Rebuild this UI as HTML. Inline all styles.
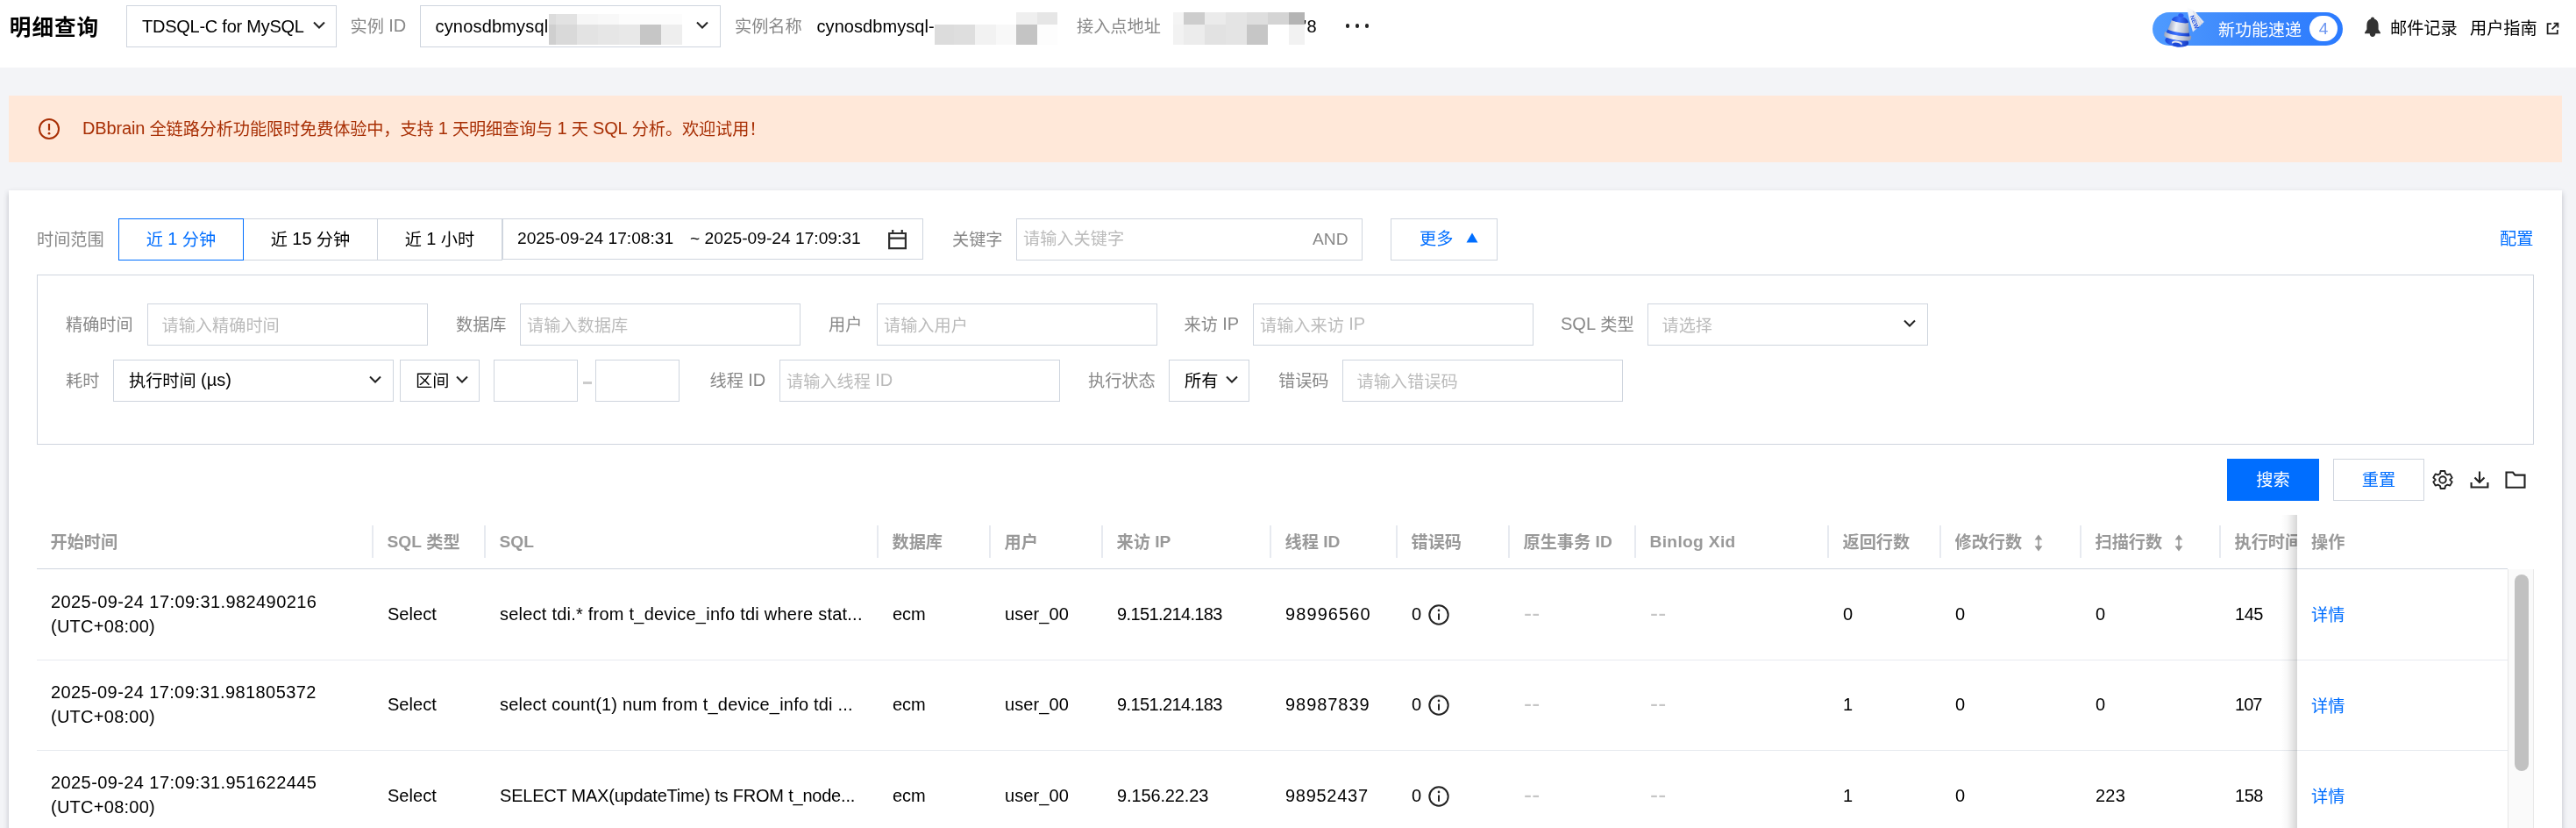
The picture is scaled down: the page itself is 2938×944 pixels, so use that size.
<!DOCTYPE html>
<html lang="zh-CN">
<head>
<meta charset="utf-8">
<title>明细查询</title>
<style>
*{box-sizing:border-box;margin:0;padding:0}
html,body{width:2938px;height:944px;overflow:hidden}
html{-webkit-font-smoothing:antialiased}
#hd,#alert,#card{will-change:transform}
body{background:#f3f4f7;font-family:"Liberation Sans","Noto Sans CJK SC",sans-serif;font-size:19.2px;color:#000;position:relative}
.abs{position:absolute;white-space:nowrap}
.lbl{position:absolute;white-space:nowrap;color:#888;height:48px;line-height:49px}
.box{position:absolute;height:48px;border:1px solid #cfd5de;background:#fff;line-height:47px;white-space:nowrap}
.ph{color:#bbb;margin-top:.5px}
.chev{position:absolute;top:15.5px;width:16px;height:12px}
.blue{color:#006eff}
/* header */
#hd{position:absolute;left:0;top:0;width:2938px;height:77px;background:#fff}
#hd .lbl,#hd .txt{top:6px}
.l{font-size:20px}
.e{font-size:20px;position:relative;top:-1.2px}
.eb{position:relative;top:-1.2px}
.txt{position:absolute;white-space:nowrap;height:48px;line-height:48px}
.mos{position:absolute;z-index:1}
.mos i{position:absolute;display:block}
/* alert */
#alert{position:absolute;left:10px;top:109px;width:2912px;height:76px;background:#ffe8d9;color:#a82f05;line-height:76px}
/* card */
#card{position:absolute;left:10px;top:217px;width:2912px;height:740px;background:#fff;box-shadow:0 3px 6px rgba(54,58,80,.3)}
#filter{position:absolute;left:32px;top:96px;width:2848px;height:194px;border:1px solid #cfd5de}
.seg{position:absolute;top:32px;height:48px;border:1px solid #cfd5de;line-height:47.5px;text-align:center;background:#fff}
/* table */
#th{position:absolute;left:32px;top:370px;width:2818px;height:62px;border-bottom:1px solid #cfd5de;overflow:hidden}
#th span{position:absolute;top:1px;margin-left:-.5px;height:61px;line-height:62px;color:#999;font-weight:bold;white-space:nowrap}
#th i{position:absolute;top:12px;width:2px;margin-left:-1px;height:37px;background:#e7eaf0}
.row{position:absolute;left:32px;width:2818px;height:104px;border-bottom:1px solid #e7eaef;overflow:hidden}
.row span{position:absolute;white-space:nowrap;line-height:28.8px;font-size:20px}
.row .c{top:37px}
#row2 span,#row2 svg{margin-top:-1px}
#row3 span,#row3 svg{margin-top:-.5px}
#row2 .g{margin-top:-1.7px}
#row3 .g{margin-top:-1.2px}
.row .g{color:#c6c6c6;font-size:27px;letter-spacing:.3px;margin-top:-.7px}
.info{position:absolute;left:1586.9px;top:40.3px;width:24px;height:24px}
#fix{position:absolute;left:2610px;top:370px;width:240px;height:380px;background:#fff}
#fix:before{content:"";position:absolute;left:-18px;top:0;width:18px;height:380px;background:linear-gradient(90deg,rgba(0,0,0,0) 0%,rgba(0,0,0,.03) 40%,rgba(0,0,0,.16) 100%)}
#fix .h{position:absolute;left:16px;top:1px;height:61px;line-height:62px;color:#999;font-weight:bold}
#fix .hl{position:absolute;left:0;top:61px;width:240px;height:1px;background:#cfd5de}
#fix a{position:absolute;left:16px;color:#006eff;line-height:28.8px}
#fix .rl{position:absolute;left:0;width:240px;height:1px;background:#e7eaef}
#sb{position:absolute;left:2850px;top:432px;width:30px;height:320px;background:#fafafa;border-left:1px solid #e8e8e8;border-right:1px solid #e8e8e8}
/*FIT*/
#r1_1{letter-spacing:0.41px}
#r2_1{letter-spacing:0.39px}
#r3_1{letter-spacing:0.41px}
#r1_1b{letter-spacing:0.26px}
#r2_1b{letter-spacing:0.26px}
#r3_1b{letter-spacing:0.26px}
#r1_2{letter-spacing:0.03px}
#r2_2{letter-spacing:0.03px}
#r3_2{letter-spacing:0.03px}
#r1_3{letter-spacing:0.23px}
#r2_3{letter-spacing:0.20px}
#r3_3{letter-spacing:-0.21px}
#r1_4{letter-spacing:-0.10px}
#r2_4{letter-spacing:-0.10px}
#r3_4{letter-spacing:-0.10px}
#r1_5{letter-spacing:0.10px}
#r2_5{letter-spacing:0.10px}
#r3_5{letter-spacing:0.10px}
#r1_6{letter-spacing:-0.62px}
#r2_6{letter-spacing:-0.62px}
#r3_6{letter-spacing:-0.13px}
#r1_7{letter-spacing:1.09px}
#r2_7{letter-spacing:0.95px}
#r3_7{letter-spacing:0.72px}
#r3_13{letter-spacing:0.21px}
#r1_14{letter-spacing:-0.44px}
#r2_14{letter-spacing:-0.94px}
#r3_14{letter-spacing:-0.44px}
#h1{letter-spacing:-0.25px}
#h2{letter-spacing:0.18px}
#h3{letter-spacing:0.07px}
#al{letter-spacing:-0.13px}
/*ENDFIT*/
#sb b{position:absolute;left:7px;top:6px;width:16px;height:224px;border-radius:8px;background:#c1c1c1}
</style>
</head>
<body>
<div id="hd">
  <div class="abs" style="left:10.8px;top:8.2px;height:48px;line-height:48px;font-size:24.6px;letter-spacing:1px;font-weight:bold;">明细查询</div>
  <div class="box" style="left:144px;top:6px;width:240px;"><span id="h1" class="abs l" style="left:17px">TDSQL-C for MySQL</span>
    <svg class="chev" style="left:210.5px" viewBox="0 0 16 12"><path d="M2 2.5 L8 8.5 L14 2.5" fill="none" stroke="#222" stroke-width="2"/></svg></div>
  <div class="lbl" style="left:399.5px">实例 <span class="e">ID</span></div>
  <div class="box" style="left:479px;top:6px;width:343px;"><span id="h2" class="abs l" style="left:16.5px">cynosdbmysql</span>
    <svg class="chev" style="left:313px" viewBox="0 0 16 12"><path d="M2 2.5 L8 8.5 L14 2.5" fill="none" stroke="#222" stroke-width="2"/></svg></div>
  <div class="mos" style="left:626px;top:16px;width:152px;height:35px;background:#fff">
    <i style="left:0px;top:0px;width:8px;height:12px;background:#dcdcdc"></i>
    <i style="left:8px;top:0px;width:24px;height:12px;background:#e2e2e2"></i>
    <i style="left:32px;top:0px;width:24px;height:12px;background:#f6f6f6"></i>
    <i style="left:56px;top:0px;width:24px;height:12px;background:#f8f8f8"></i>
    <i style="left:80px;top:0px;width:72px;height:12px;background:#fcfcfc"></i>
    <i style="left:0px;top:12px;width:8px;height:23px;background:#cfcfcf"></i>
    <i style="left:8px;top:12px;width:24px;height:23px;background:#d9d9d9"></i>
    <i style="left:32px;top:12px;width:24px;height:23px;background:#e3e3e3"></i>
    <i style="left:56px;top:12px;width:24px;height:23px;background:#e6e6e6"></i>
    <i style="left:80px;top:12px;width:24px;height:23px;background:#e8e8e8"></i>
    <i style="left:104px;top:12px;width:24px;height:23px;background:#c6c6c6"></i>
    <i style="left:128px;top:12px;width:24px;height:23px;background:#eeeeee"></i>
  </div>
  <div class="lbl" style="left:838px">实例名称</div>
  <div id="h3" class="txt l" style="left:931.5px">cynosdbmysql-</div>
  <div class="mos" style="left:1066px;top:14px;width:140px;height:37px;">
    <i style="left:0px;top:14px;width:22px;height:23px;background:#dcdcdc"></i>
    <i style="left:22px;top:14px;width:24px;height:23px;background:#dedede"></i>
    <i style="left:46px;top:14px;width:24px;height:23px;background:#f2f2f2"></i>
    <i style="left:70px;top:14px;width:23px;height:23px;background:#f8f8f8"></i>
    <i style="left:93px;top:14px;width:24px;height:23px;background:#c4c4c4"></i>
    <i style="left:117px;top:14px;width:23px;height:23px;background:#fdfdfd"></i>
    <i style="left:93px;top:0px;width:24px;height:14px;background:#efefef"></i>
    <i style="left:117px;top:0px;width:23px;height:14px;background:#e6e6e6"></i>
  </div>
  <div class="lbl" style="left:1228px">接入点地址</div>
  <div class="mos" style="left:1338px;top:14px;width:150px;height:37px;">
    <i style="left:0px;top:0px;width:12px;height:14px;background:#f4f4f4"></i>
    <i style="left:12px;top:0px;width:24px;height:14px;background:#cdcdcd"></i>
    <i style="left:36px;top:0px;width:24px;height:14px;background:#ebebeb"></i>
    <i style="left:60px;top:0px;width:24px;height:14px;background:#e4e4e4"></i>
    <i style="left:84px;top:0px;width:24px;height:14px;background:#dedede"></i>
    <i style="left:108px;top:0px;width:24px;height:14px;background:#d4d4d4"></i>
    <i style="left:132px;top:0px;width:18px;height:14px;background:#b4b4b4"></i>
    <i style="left:0px;top:14px;width:12px;height:23px;background:#f2f2f2"></i>
    <i style="left:12px;top:14px;width:24px;height:23px;background:#ececec"></i>
    <i style="left:36px;top:14px;width:24px;height:23px;background:#e2e2e2"></i>
    <i style="left:60px;top:14px;width:24px;height:23px;background:#e4e4e4"></i>
    <i style="left:84px;top:14px;width:24px;height:23px;background:#c6c6c6"></i>
    <i style="left:108px;top:14px;width:24px;height:23px;background:#ffffff"></i>
    <i style="left:132px;top:14px;width:18px;height:23px;background:#f2f2f2"></i>
  </div>
  <div class="txt l" style="left:1486px">’8</div>
  <div class="abs" style="left:1534px;top:27px;width:30px;height:6px">
    <i style="position:absolute;left:0.9px;top:0.4px;width:4.2px;height:4.2px;border-radius:3px;background:#222"></i>
    <i style="position:absolute;left:11.8px;top:0.4px;width:4.2px;height:4.2px;border-radius:3px;background:#222"></i>
    <i style="position:absolute;left:22.6px;top:0.4px;width:4.2px;height:4.2px;border-radius:3px;background:#222"></i>
  </div>
  <!-- right -->
  <div class="abs" id="pill" style="left:2455px;top:14px;width:217px;height:38px;border-radius:19px;background:linear-gradient(90deg,#4f9bff 0%,#3b86fb 50%,#2b7bff 100%)">
    <span class="abs" style="left:75px;top:2px;line-height:38px;color:#fff;font-size:19px">新功能速递</span>
    <span class="abs" style="left:179px;top:4px;width:32px;height:29px;border-radius:14.5px;background:#fff;color:#6b95f0;text-align:center;line-height:29px;font-size:19px">4</span>
  </div>
  <svg class="abs" style="left:2460px;top:4px;width:60px;height:52px" viewBox="0 0 60 52">
    <defs>
      <linearGradient id="sv" x1="0" y1="0" x2="1" y2="0"><stop offset="0" stop-color="#9aa4bd"/><stop offset=".35" stop-color="#eef1f8"/><stop offset=".7" stop-color="#c5ccdc"/><stop offset="1" stop-color="#8e98b3"/></linearGradient>
      <linearGradient id="bl" x1="0" y1="0" x2="1" y2="0"><stop offset="0" stop-color="#1a47d6"/><stop offset=".45" stop-color="#3f74ff"/><stop offset="1" stop-color="#1438bf"/></linearGradient>
      <linearGradient id="tg" x1="0" y1="0" x2="1" y2="1"><stop offset="0" stop-color="#ffffff"/><stop offset="1" stop-color="#cfd6e6"/></linearGradient>
    </defs>
    <polygon points="33.9,4.1 42.3,8.1 53.8,21 41,32.5 36.9,18.3" fill="url(#tg)"/>
    <path d="M41.5 9 L49.5 26 M44.5 10.5 L51.5 24" stroke="#c3cadb" stroke-width=".7" fill="none"/>
    <text x="0" y="0" transform="translate(37.6,14.5) rotate(68)" font-family="Liberation Sans,sans-serif" font-size="7" font-weight="bold" fill="#1f4fe0">NEW</text>
    <g transform="translate(25,29) rotate(9)">
      <ellipse cx="0" cy="14.5" rx="13.5" ry="6" fill="url(#bl)"/>
      <ellipse cx="0.5" cy="16.4" rx="6" ry="2.6" fill="#dfe4f0"/>
      <ellipse cx="0.5" cy="18.2" rx="5" ry="2.3" fill="#1d49d8"/>
      <path d="M-15.5 6.5 C-15.5 3.5 15.5 3.5 15.5 6.5 L15.5 9.5 C15.5 14 -15.5 14 -15.5 9.5 Z" fill="url(#sv)"/>
      <path d="M-12 2 L12 2 L13.6 6.2 C8 8 -8 8 -13.6 6.2 Z" fill="url(#bl)"/>
      <path d="M-9.5 -9 L9.5 -9 L12.2 2.6 C6 4.4 -6 4.4 -12.2 2.6 Z" fill="url(#sv)"/>
      <path d="M-9.6 -8.5 C-9 -16.5 9 -16.5 9.6 -8.5 C5 -6.8 -5 -6.8 -9.6 -8.5 Z" fill="url(#bl)"/>
      <ellipse cx="0" cy="-15.6" rx="3.2" ry="2.2" fill="#2a5cf0"/>
    </g>
  </svg>
  <svg class="abs" style="left:2696px;top:19px;width:20px;height:24px" viewBox="0 0 20 24">
    <path d="M10 0.5 C11.2 0.5 12 1.3 12 2.4 C15 3.3 16.6 6 16.6 9.4 L16.6 14.5 L19 18.2 L19 19.2 L1 19.2 L1 18.2 L3.4 14.5 L3.4 9.4 C3.4 6 5 3.3 8 2.4 C8 1.3 8.8 0.5 10 0.5 Z M6.6 19 L13.4 19 C13.2 21.6 11.8 23 10 23 C8.2 23 6.8 21.6 6.6 19 Z" fill="#333"/>
  </svg>
  <div class="txt" style="left:2726px;top:8.5px">邮件记录</div>
  <div class="txt" style="left:2817px;top:8.5px">用户指南</div>
  <svg class="abs" style="left:2904px;top:25px;width:15px;height:15px" viewBox="0 0 15 15">
    <path d="M6 2.2 H1.6 V13.4 H12.8 V9" fill="none" stroke="#222" stroke-width="1.8"/>
    <path d="M8.6 1.6 H13.4 V6.4 M13.2 1.8 L6.6 8.4" fill="none" stroke="#222" stroke-width="1.8"/>
  </svg>
</div>

<div id="alert">
  <svg class="abs" style="left:33px;top:25px;width:26px;height:26px" viewBox="0 0 26 26">
    <circle cx="13" cy="13" r="11" fill="none" stroke="#a82f05" stroke-width="2"/>
    <path d="M13 7 V14.6" stroke="#a82f05" stroke-width="2.2" fill="none"/><circle cx="13" cy="18.2" r="1.4" fill="#a82f05"/>
  </svg>
  <span id="al" class="abs" style="left:84px;top:0"><span class="e">DBbrain</span> 全链路分析功能限时免费体验中，支持 <span class="e">1</span> 天明细查询与 <span class="e">1</span> 天 <span class="e">SQL</span> 分析。欢迎试用！</span>
</div>

<div id="card">
  <div class="lbl" style="left:32px;top:32px">时间范围</div>
  <div class="seg" style="left:278px;width:143px;left:267px;width:154px">近 <span class="e">15</span> 分钟</div>
  <div class="seg" style="left:420px;width:143px">近 <span class="e">1</span> 小时</div>
  <div class="seg blue" style="left:125px;width:143px;border-color:#006eff;">近 <span class="e">1</span> 分钟</div>
  <div class="box" style="left:563px;top:32px;width:480px;height:47px"><span class="abs" style="left:16px;top:-2px">2025-09-24 17:08:31</span><span class="abs" style="left:213px;top:-2px">~ 2025-09-24 17:09:31</span>
    <svg class="abs" style="left:439.25px;top:12px;width:21.25px;height:22.5px" viewBox="0 0 21.25 22.5"><path d="M1.15 4 H19.9 V21.15 H1.15 Z M1.15 9.6 H19.9 M5.25 0 V4 M15.75 0 V4" fill="none" stroke="#2e2e2e" stroke-width="2.2"/></svg>
  </div>
  <div class="lbl" style="left:1076px;top:32px">关键字</div>
  <div class="box" style="left:1149px;top:32px;width:395px"><span class="abs ph" style="left:7px;top:-1.5px">请输入关键字</span><span class="abs" style="left:337px;top:-1.5px;color:#888">AND</span></div>
  <div class="box" style="left:1576px;top:32px;width:122px"><span class="abs blue" style="left:32px;top:-1px">更多</span>
    <svg class="abs" style="left:84.5px;top:15px;width:14px;height:12px" viewBox="0 0 14 12"><path d="M7 0.5 L13.5 11.5 H0.5 Z" fill="#006eff"/></svg></div>
  <div class="abs blue" style="left:2841px;top:32px;height:48px;line-height:47px">配置</div>

  <div id="filter">
    <div class="lbl" style="left:32px;top:32px">精确时间</div>
    <div class="box" style="left:125px;top:32px;width:320px"><span class="abs ph" style="left:15.5px">请输入精确时间</span></div>
    <div class="lbl" style="left:477px;top:32px">数据库</div>
    <div class="box" style="left:550px;top:32px;width:320px"><span class="abs ph" style="left:7px">请输入数据库</span></div>
    <div class="lbl" style="left:902px;top:32px">用户</div>
    <div class="box" style="left:957px;top:32px;width:320px"><span class="abs ph" style="left:7px">请输入用户</span></div>
    <div class="lbl" style="left:1307.5px;top:32px">来访 <span class="e">IP</span></div>
    <div class="box" style="left:1386px;top:32px;width:320px"><span class="abs ph" style="left:7px">请输入来访 <span class="e">IP</span></span></div>
    <div class="lbl" style="left:1737px;top:32px"><span class="e">SQL</span> 类型</div>
    <div class="box" style="left:1836px;top:32px;width:320px"><span class="abs ph" style="left:15.5px">请选择</span>
      <svg class="chev" style="left:290px" viewBox="0 0 16 12"><path d="M2 2.5 L8 8.5 L14 2.5" fill="none" stroke="#222" stroke-width="2"/></svg></div>

    <div class="lbl" style="left:32px;top:96px">耗时</div>
    <div class="box" style="left:86px;top:96px;width:320px"><span class="abs" style="left:17px">执行时间 <span class="e">(µs)</span></span>
      <svg class="chev" style="left:290px" viewBox="0 0 16 12"><path d="M2 2.5 L8 8.5 L14 2.5" fill="none" stroke="#222" stroke-width="2"/></svg></div>
    <div class="box" style="left:413px;top:96px;width:91px"><span class="abs" style="left:17px">区间</span>
      <svg class="chev" style="left:62px" viewBox="0 0 16 12"><path d="M2 2.5 L8 8.5 L14 2.5" fill="none" stroke="#222" stroke-width="2"/></svg></div>
    <div class="box" style="left:520px;top:96px;width:96px"></div>
    <div class="abs" style="left:622px;top:120.5px;width:10px;height:3px;background:#ccc"></div>
    <div class="box" style="left:636px;top:96px;width:96px"></div>
    <div class="lbl" style="left:766.5px;top:96px">线程 <span class="e">ID</span></div>
    <div class="box" style="left:846px;top:96px;width:320px"><span class="abs ph" style="left:7px">请输入线程 <span class="e">ID</span></span></div>
    <div class="lbl" style="left:1198px;top:96px">执行状态</div>
    <div class="box" style="left:1290px;top:96px;width:92px"><span class="abs" style="left:17px">所有</span>
      <svg class="chev" style="left:63px" viewBox="0 0 16 12"><path d="M2 2.5 L8 8.5 L14 2.5" fill="none" stroke="#222" stroke-width="2"/></svg></div>
    <div class="lbl" style="left:1415px;top:96px">错误码</div>
    <div class="box" style="left:1488px;top:96px;width:320px"><span class="abs ph" style="left:15.5px">请输入错误码</span></div>
  </div>

  <div class="abs" style="left:2530px;top:306px;width:105px;height:48px;background:#006eff;color:#fff;text-align:center;line-height:50px">搜索</div>
  <div class="box blue" style="left:2651px;top:306px;width:104px;text-align:center;line-height:48px">重置</div>
  <svg class="abs" style="left:2764px;top:317.5px;width:24px;height:24px" viewBox="0 0 24 24"><path d="M12 8.2 A3.8 3.8 0 1 0 12 15.8 A3.8 3.8 0 1 0 12 8.2 Z M9.6 2 H14.4 L15 5 L17.4 6.4 L20.3 5.4 L22.7 9.6 L20.4 11.6 V12.4 L22.7 14.4 L20.3 18.6 L17.4 17.6 L15 19 L14.4 22 H9.6 L9 19 L6.6 17.6 L3.7 18.6 L1.3 14.4 L3.6 12.4 V11.6 L1.3 9.6 L3.7 5.4 L6.6 6.4 L9 5 Z" fill="none" stroke="#222" stroke-width="1.9" stroke-linejoin="round"/></svg>
  <svg class="abs" style="left:2807px;top:319px;width:22px;height:22px" viewBox="0 0 22 22"><path d="M11 1.5 V13.5 M5.5 8.5 L11 14 L16.5 8.5 M1.6 14 V19.5 H20.4 V14" fill="none" stroke="#222" stroke-width="2.1"/></svg>
  <svg class="abs" style="left:2846.5px;top:318.5px;width:24px;height:22px" viewBox="0 0 24 22"><path d="M1.5 2.5 H9 L11.5 5.6 H22.5 V19.8 H1.5 Z" fill="none" stroke="#222" stroke-width="2.1"/></svg>

  <div id="th">
    <span style="left:16px">开始时间</span><i style="left:383px"></i>
    <span style="left:400px"><b class="eb">SQL</b> 类型</span><i style="left:511px"></i>
    <span style="left:528px"><b class="eb">SQL</b></span><i style="left:959px"></i>
    <span style="left:976px">数据库</span><i style="left:1087px"></i>
    <span style="left:1104px">用户</span><i style="left:1215px"></i>
    <span style="left:1232px">来访 <b class="eb">IP</b></span><i style="left:1407px"></i>
    <span style="left:1424px">线程 <b class="eb">ID</b></span><i style="left:1551px"></i>
    <span style="left:1568px">错误码</span><i style="left:1679px"></i>
    <span style="left:1696px">原生事务 <b class="eb">ID</b></span><i style="left:1823px"></i>
    <span style="left:1840px;letter-spacing:.33px"><b class="eb">Binlog Xid</b></span><i style="left:2043px"></i>
    <span style="left:2060px">返回行数</span><i style="left:2171px"></i>
    <span style="left:2188px">修改行数</span><i style="left:2331px"></i>
    <span style="left:2348px">扫描行数</span><i style="left:2490px"></i>
    <span style="left:2507px">执行时间</span>
    <svg class="abs" style="left:2276.7px;top:21.5px;width:12px;height:20px" viewBox="0 0 12 20"><path d="M6 4 V16" stroke="#999" stroke-width="1.6"/><path d="M6 0.6 L10.4 6.6 H1.6 Z M6 19.4 L10.4 13.4 H1.6 Z" fill="#999"/></svg>
    <svg class="abs" style="left:2436.7px;top:21.5px;width:12px;height:20px" viewBox="0 0 12 20"><path d="M6 4 V16" stroke="#999" stroke-width="1.6"/><path d="M6 0.6 L10.4 6.6 H1.6 Z M6 19.4 L10.4 13.4 H1.6 Z" fill="#999"/></svg>
  </div>

  <div class="row" style="top:432px">
    <span id="r1_1" style="left:16px;top:22.5px">2025-09-24 17:09:31.982490216</span>
    <span id="r1_1b" style="left:16px;top:50.5px">(UTC+08:00)</span>
    <span id="r1_2" class="c" style="left:400px">Select</span>
    <span id="r1_3" class="c" style="left:528px">select tdi.* from t_device_info tdi where stat...</span>
    <span id="r1_4" class="c" style="left:976px">ecm</span>
    <span id="r1_5" class="c" style="left:1104px">user_00</span>
    <span id="r1_6" class="c" style="left:1232px">9.151.214.183</span>
    <span id="r1_7" class="c" style="left:1424px">98996560</span>
    <span id="r1_8" class="c" style="left:1568px">0</span>
    <svg class="info" viewBox="0 0 24 24"><circle cx="12" cy="12" r="10.7" fill="none" stroke="#222" stroke-width="2"/><path d="M12 10.4 V17.8" stroke="#222" stroke-width="2"/><circle cx="12" cy="6.9" r="1.3" fill="#222"/></svg>
    <span id="r1_9" class="c g" style="left:1696px">--</span>
    <span id="r1_10" class="c g" style="left:1840px">--</span>
    <span id="r1_11" class="c" style="left:2060px">0</span>
    <span id="r1_12" class="c" style="left:2188px">0</span>
    <span id="r1_13" class="c" style="left:2348px">0</span>
    <span id="r1_14" class="c" style="left:2507px">145</span>
  </div>
  <div class="row" id="row2" style="top:536px;height:103px">
    <span id="r2_1" style="left:16px;top:22.5px">2025-09-24 17:09:31.981805372</span>
    <span id="r2_1b" style="left:16px;top:50.5px">(UTC+08:00)</span>
    <span id="r2_2" class="c" style="left:400px">Select</span>
    <span id="r2_3" class="c" style="left:528px">select count(1) num from t_device_info tdi ...</span>
    <span id="r2_4" class="c" style="left:976px">ecm</span>
    <span id="r2_5" class="c" style="left:1104px">user_00</span>
    <span id="r2_6" class="c" style="left:1232px">9.151.214.183</span>
    <span id="r2_7" class="c" style="left:1424px">98987839</span>
    <span id="r2_8" class="c" style="left:1568px">0</span>
    <svg class="info" viewBox="0 0 24 24"><circle cx="12" cy="12" r="10.7" fill="none" stroke="#222" stroke-width="2"/><path d="M12 10.4 V17.8" stroke="#222" stroke-width="2"/><circle cx="12" cy="6.9" r="1.3" fill="#222"/></svg>
    <span id="r2_9" class="c g" style="left:1696px">--</span>
    <span id="r2_10" class="c g" style="left:1840px">--</span>
    <span id="r2_11" class="c" style="left:2060px">1</span>
    <span id="r2_12" class="c" style="left:2188px">0</span>
    <span id="r2_13" class="c" style="left:2348px">0</span>
    <span id="r2_14" class="c" style="left:2507px">107</span>
  </div>
  <div class="row" id="row3" style="top:639px">
    <span id="r3_1" style="left:16px;top:22.5px">2025-09-24 17:09:31.951622445</span>
    <span id="r3_1b" style="left:16px;top:50.5px">(UTC+08:00)</span>
    <span id="r3_2" class="c" style="left:400px">Select</span>
    <span id="r3_3" class="c" style="left:528px">SELECT MAX(updateTime) ts FROM t_node...</span>
    <span id="r3_4" class="c" style="left:976px">ecm</span>
    <span id="r3_5" class="c" style="left:1104px">user_00</span>
    <span id="r3_6" class="c" style="left:1232px">9.156.22.23</span>
    <span id="r3_7" class="c" style="left:1424px">98952437</span>
    <span id="r3_8" class="c" style="left:1568px">0</span>
    <svg class="info" viewBox="0 0 24 24"><circle cx="12" cy="12" r="10.7" fill="none" stroke="#222" stroke-width="2"/><path d="M12 10.4 V17.8" stroke="#222" stroke-width="2"/><circle cx="12" cy="6.9" r="1.3" fill="#222"/></svg>
    <span id="r3_9" class="c g" style="left:1696px">--</span>
    <span id="r3_10" class="c g" style="left:1840px">--</span>
    <span id="r3_11" class="c" style="left:2060px">1</span>
    <span id="r3_12" class="c" style="left:2188px">0</span>
    <span id="r3_13" class="c" style="left:2348px">223</span>
    <span id="r3_14" class="c" style="left:2507px">158</span>
  </div>

  <div id="fix">
    <span class="h">操作</span><div class="hl"></div>
    <a style="top:101px">详情</a><div class="rl" style="top:165px"></div>
    <a style="top:205px">详情</a><div class="rl" style="top:268px"></div>
    <a style="top:308px">详情</a>
  </div>
  <div id="sb"><b></b></div>
</div>
</body>
</html>
